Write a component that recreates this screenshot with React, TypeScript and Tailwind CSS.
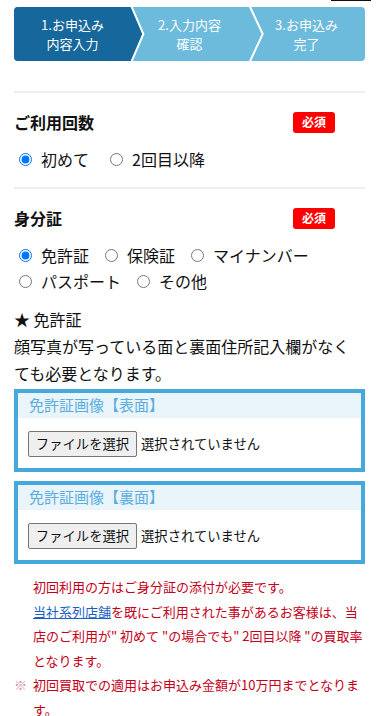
import React from 'react';

const font = { fontFamily: '"Noto Sans CJK JP", "Noto Sans", sans-serif' };

function Steps() {
  return (
    <div className="relative mx-[14px] mt-[6px] h-[54px] overflow-hidden rounded-[4px] bg-[#6cbadc]">
      <svg className="absolute inset-0 h-full w-full" viewBox="0 0 350 54" preserveAspectRatio="none">
        <polygon points="0,0 117,0 129,27 117,54 0,54" fill="#16679b" />
        <polyline points="117,-1 129,27 117,55" fill="none" stroke="#fff" strokeWidth="2" />
        <polyline points="235,-1 248,27 235,55" fill="none" stroke="#fff" strokeWidth="2" />
      </svg>
      <div className="relative flex h-full text-[13px] leading-[19px] text-white">
        <div className="flex flex-1 flex-col items-center justify-center">
          <span>1.お申込み</span>
          <span>内容入力</span>
        </div>
        <div className="flex flex-1 flex-col items-center justify-center">
          <span>2.入力内容</span>
          <span>確認</span>
        </div>
        <div className="flex flex-1 flex-col items-center justify-center">
          <span>3.お申込み</span>
          <span>完了</span>
        </div>
      </div>
    </div>
  );
}

function Heading({ title }: { title: string }) {
  return (
    <div className="flex items-center justify-between pr-[30px]">
      <h2 className="text-[16px] font-bold leading-[24px] text-[#111]">{title}</h2>
      <span className="flex h-[21px] w-[42px] items-center justify-center rounded-[3px] bg-[#ff0000] text-[12px] font-bold text-white">
        必須
      </span>
    </div>
  );
}

function Radio({ name, label, checked }: { name: string; label: string; checked?: boolean }) {
  return (
    <label className="flex h-[26px] items-center">
      <input type="radio" name={name} defaultChecked={checked} className="m-0 ml-[5px] mr-[9px] h-[13px] w-[13px]" />
      <span>{label}</span>
    </label>
  );
}

function FileBox({ title }: { title: string }) {
  return (
    <div className="border-[4px] border-[#45aadb]">
      <div className="flex h-[25px] items-center bg-[#e9f4fb] pl-[11px] text-[15px] text-[#5aafe0]">{title}</div>
      <div className="flex items-center pb-[11px] pl-[10px] pt-[13px] text-[13.33px]">
        <button className="h-[26px] w-[109px] rounded-[2px] border border-[#767676] bg-[#efefef] text-[#111]">
          ファイルを選択
        </button>
        <span className="ml-[4px] text-[#111]">選択されていません</span>
      </div>
    </div>
  );
}

export default function App() {
  return (
    <div className="min-h-screen bg-white text-[16px] text-[#111]" style={font}>
      <div className="h-[1px]">
        <div className="ml-[331px] h-[1px] w-[40px] bg-[#111]" />
      </div>
      <Steps />

      <div className="mx-[14px]">
        <div className="mt-[30px] h-[2px] bg-[#eeeeee]" />

        <div className="mt-[17px]">
          <Heading title="ご利用回数" />
        </div>
        <div className="mt-[12px] flex flex-wrap gap-x-[16px]">
          <Radio name="count" label="初めて" checked />
          <Radio name="count" label="2回目以降" />
        </div>

        <div className="mt-[15px] h-[2px] bg-[#eeeeee]" />

        <div className="mt-[17px]">
          <Heading title="身分証" />
        </div>
        <div className="mt-[12px] flex flex-wrap gap-x-[11px]">
          <Radio name="id" label="免許証" checked />
          <Radio name="id" label="保険証" />
          <Radio name="id" label="マイナンバー" />
          <Radio name="id" label="パスポート" />
          <Radio name="id" label="その他" />
        </div>

        <div className="mt-[12px] pr-[6px] leading-[27px]">
          <p>★ 免許証</p>
          <p>顔写真が写っている面と裏面住所記入欄がなくても必要となります。</p>
        </div>

        <div className="mt-[2px] flex flex-col gap-[9px]">
          <FileBox title="免許証画像【表面】" />
          <FileBox title="免許証画像【裏面】" />
        </div>

        <div className="mt-[11px] pb-[10px] pr-[2px] text-[13px] leading-[24.6px] text-[#c4001a]">
          <p className="pl-[19px]">初回利用の方はご身分証の添付が必要です。</p>
          <p className="pl-[19px]">
            <a href="#" className="text-[#1a5fc8] underline">当社系列店舗</a>
            を既にご利用された事があるお客様は、当店のご利用が" 初めて "の場合でも" 2回目以降 "の買取率となります。
          </p>
          <div className="flex">
            <span className="w-[19px] shrink-0 text-[#d98aa0]">※</span>
            <p>初回買取での適用はお申込み金額が10万円までとなります。</p>
          </div>
        </div>
      </div>
    </div>
  );
}
